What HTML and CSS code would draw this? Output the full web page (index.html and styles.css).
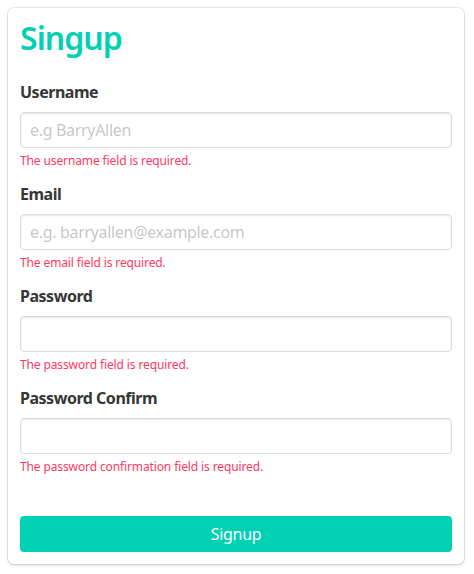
FILE: index.html
```html
<!DOCTYPE html>
<html>
<head>
<meta charset="utf-8">
<link rel="stylesheet" href="styles.css">
</head>
<body>
<div class="box">
  <h1 class="title">Singup</h1>
  <div class="field">
    <label class="label">Username</label>
    <input class="input" type="text" placeholder="e.g BarryAllen">
    <p class="help">The username field is required.</p>
  </div>
  <div class="field">
    <label class="label">Email</label>
    <input class="input" type="text" placeholder="e.g. barryallen@example.com">
    <p class="help">The email field is required.</p>
  </div>
  <div class="field">
    <label class="label">Password</label>
    <input class="input" type="password">
    <p class="help">The password field is required.</p>
  </div>
  <div class="field">
    <label class="label">Password Confirm</label>
    <input class="input" type="password">
    <p class="help">The password confirmation field is required.</p>
  </div>
  <div class="actions">
    <button class="button">Signup</button>
  </div>
</div>
</body>
</html>
```
FILE: styles.css
```css
html, body {
  margin: 0;
  padding: 0;
  background: #fff;
}
body {
  padding: 8px 10px 8px 8px;
  font-family: "Noto Sans", "Open Sans", sans-serif;
  color: #4a4a4a;
  font-size: 16px;
  line-height: 1.5;
  letter-spacing: -0.02em;
}
.box {
  background: #fff;
  border-radius: 6px;
  box-shadow: 0 2px 3px rgba(10,10,10,0.1), 0 0 0 1px rgba(10,10,10,0.1);
  padding: 12px;
}
.title {
  margin: 0 0 24px 0;
  font-size: 32px;
  font-weight: 600;
  line-height: 36px;
  color: #00d1b2;
  letter-spacing: -0.03em;
}
.field {
  display: flex;
  flex-direction: column;
  margin-bottom: 12px;
}
.label {
  display: block;
  color: #363636;
  font-weight: 700;
  font-size: 16px;
  line-height: 24px;
  margin-bottom: 8px;
  letter-spacing: -0.03em;
}
.input {
  box-sizing: border-box;
  height: 36px;
  width: 100%;
  margin: 0;
  padding: 0 9px;
  border: 1px solid #dbdbdb;
  border-radius: 4px;
  box-shadow: inset 0 1px 2px rgba(10,10,10,0.1);
  font-family: inherit;
  font-size: 16px;
  letter-spacing: -0.02em;
  color: #363636;
  background: #fff;
  outline: none;
}
.input::placeholder {
  color: rgba(54,54,54,0.3);
}
.help {
  margin: 4px 0 0 0;
  font-size: 12px;
  line-height: 18px;
  color: #ff3860;
  letter-spacing: -0.01em;
}
.actions {
  padding-top: 28px;
}
.button {
  display: block;
  box-sizing: border-box;
  width: 100%;
  height: 36px;
  margin: 0;
  border: 1px solid transparent;
  border-radius: 4px;
  background: #00d1b2;
  color: #fff;
  font-family: inherit;
  font-size: 16px;
  letter-spacing: -0.02em;
  cursor: pointer;
}
```
